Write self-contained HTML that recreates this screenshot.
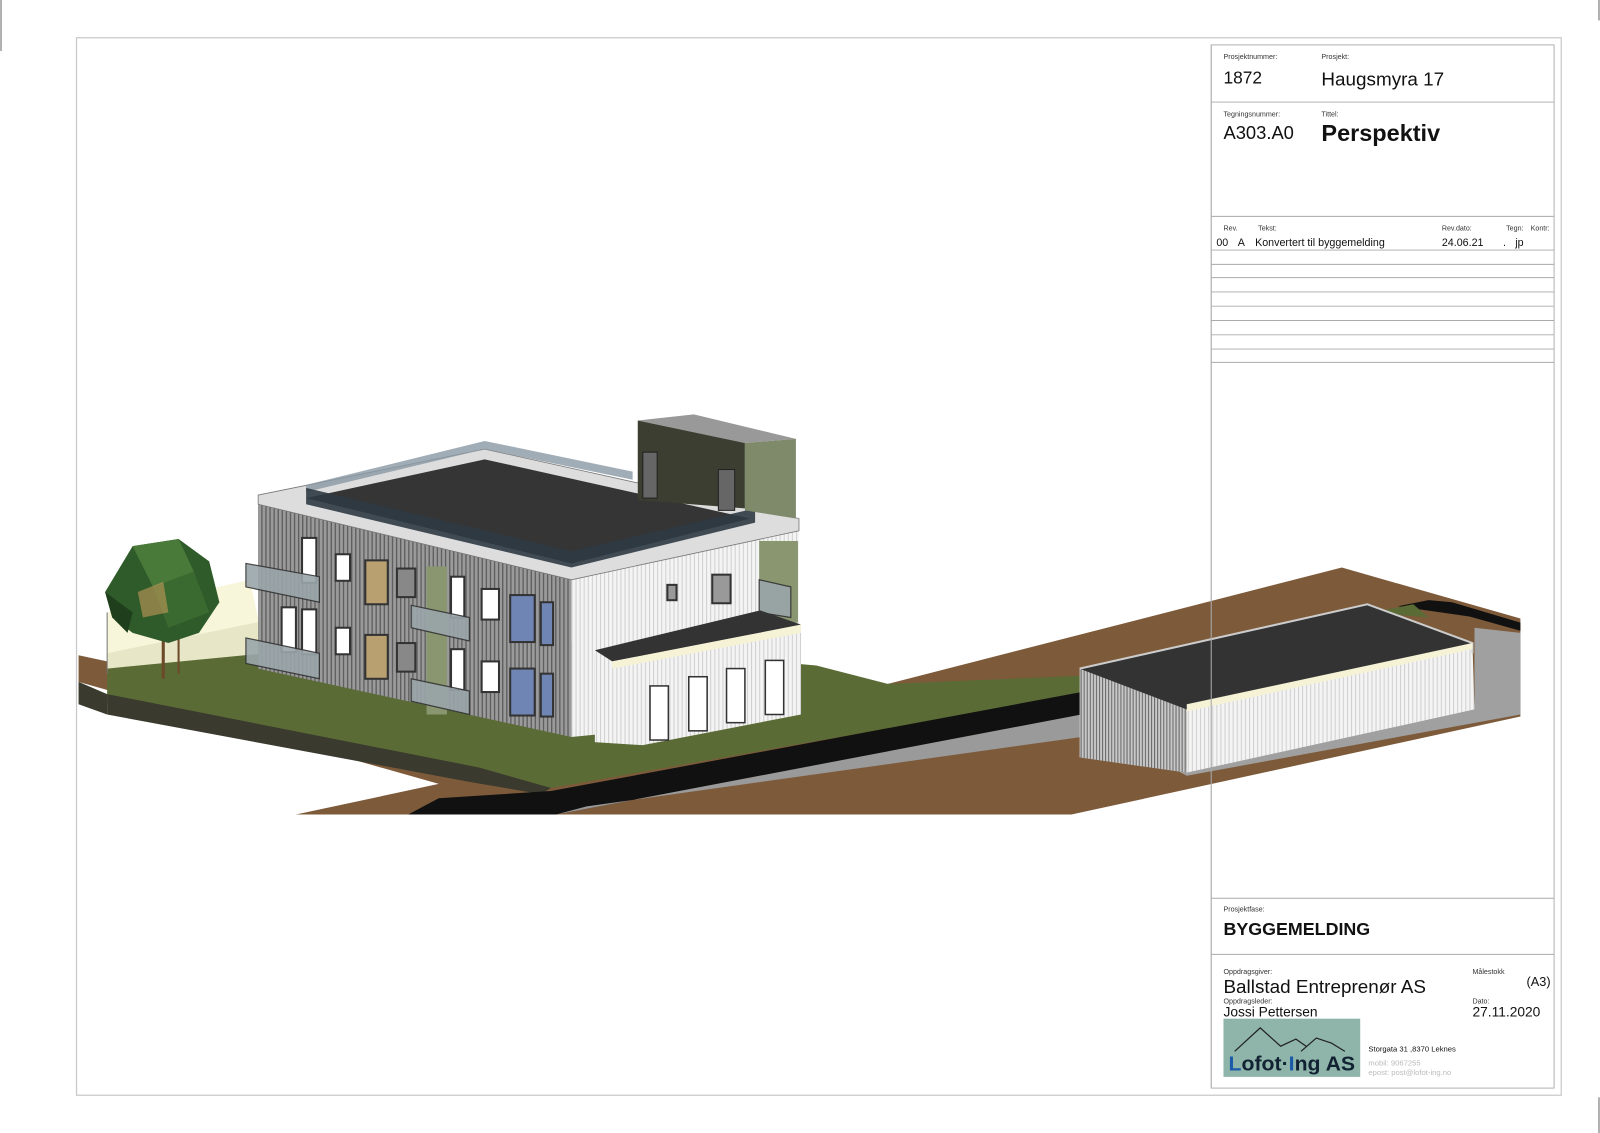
<!DOCTYPE html>
<html><head><meta charset="utf-8"><style>
html,body{margin:0;padding:0;background:#fff;width:1600px;height:1133px;overflow:hidden}
svg{display:block}
text{font-family:"Liberation Sans",sans-serif;fill:#111}
.s{font-size:7px;fill:#333}
</style></head><body>
<svg width="1600" height="1133" viewBox="0 0 1568 1110" preserveAspectRatio="none" xmlns="http://www.w3.org/2000/svg">
<defs>
<pattern id="g" width="4" height="10" patternUnits="userSpaceOnUse"><rect width="4" height="10" fill="#9a9a9a"/><rect width="1.3" height="10" fill="#5e5e5e"/></pattern>
<pattern id="w" width="4" height="10" patternUnits="userSpaceOnUse"><rect width="4" height="10" fill="#f4f4f4"/><rect width="1" height="10" fill="#cfcfcf"/></pattern>
<pattern id="gw" width="3" height="10" patternUnits="userSpaceOnUse"><rect width="3" height="10" fill="#c8c8c8"/><rect width="1" height="10" fill="#666"/></pattern>
</defs>
<line x1="1" y1="0" x2="1" y2="50" stroke="#999" stroke-width="1.5"/>
<line x1="1567" y1="0" x2="1567" y2="20" stroke="#999" stroke-width="1.5"/>
<line x1="1567" y1="1075" x2="1567" y2="1110" stroke="#999" stroke-width="1.5"/>
<rect x="75" y="37" width="1455" height="1036" fill="none" stroke="#c8c8c8" stroke-width="1.2"/>

<polygon points="77,642 560,745 870,670 1315,556 1490,606 1490,702 1050,798 290,798 430,768 77,668" fill="#7d5a3a"/>
<polygon points="105,640 270,606 800,652 870,670 1060,662 1060,680 540,772 450,760 105,690" fill="#5b6b35"/>
<polygon points="105,680 470,752 540,772 530,778 460,766 105,700" fill="#3a3a2e"/>
<polygon points="77,668 105,680 105,700 77,690" fill="#3a3a2e"/>
<polygon points="400,798 545,798 1060,700 1060,678 540,775 430,782" fill="#111"/>
<polygon points="545,798 575,790 1060,722 1060,700" fill="#9a9a9a"/>
<polygon points="1060,705 1163,760 1490,700 1490,620 1445,615 1445,690 1163,757 1058,742" fill="#a0a0a0"/>
<polygon points="1370,594 1440,604 1490,618 1490,610 1423,590 1400,588" fill="#111"/>
<polygon points="1345,600 1385,592 1400,605" fill="#5b6b35"/>
<polygon points="1058,655 1163,695 1163,757 1058,742" fill="url(#gw)"/>
<polygon points="1163,695 1443,630 1445,695 1163,757" fill="url(#w)"/>
<polygon points="1058,655 1340,592 1443,630 1163,695" fill="#333"/>
<polyline points="1058,655 1340,592 1443,630 1443,640" fill="none" stroke="#ccc" stroke-width="2"/>
<polygon points="1163,690 1443,630 1443,636 1163,697" fill="#f5f2d6"/>
<line x1="1187" y1="44" x2="1187" y2="1066" stroke="#999" stroke-width=".8"/>

<polygon points="105,600 245,568 260,640 105,655" fill="#f6f4d6" opacity=".9"/>
<line x1="105" y1="600" x2="105" y2="660" stroke="#777"/>
<polygon points="253,490 560,562 560,722 253,655" fill="url(#g)"/>
<polygon points="560,562 783,512 783,700 560,722" fill="url(#w)"/>
<polygon points="253,485 475,440 783,508 783,520 560,568 253,494" fill="#ddd" stroke="#777" stroke-width=".8"/>
<polygon points="300,488 475,450 735,508 560,552" fill="#353535"/>
<polygon points="300,475 475,432 620,462 620,470 475,440 300,482" fill="#8a98a4" opacity=".8"/>
<polygon points="300,478 560,540 740,498 740,512 560,556 300,494" fill="#2f3a44" opacity=".9"/>
<polygon points="625,412 680,406 780,430 730,434" fill="#999"/>
<polygon points="625,412 730,434 730,498 625,490" fill="#3b3e30"/>
<polygon points="730,434 780,430 780,508 730,500" fill="#7f8a6a"/>
<rect x="630" y="443" width="14" height="45" fill="#666" stroke="#222"/>
<rect x="704" y="460" width="16" height="40" fill="#666" stroke="#222"/>
<rect x="744" y="530" width="38" height="80" fill="#8a9670"/>
<g fill="#fff" stroke="#333" stroke-width="2">
<rect x="296" y="527" width="14" height="44"/><rect x="296" y="597" width="14" height="44"/>
<rect x="276" y="595" width="14" height="44"/>
<rect x="329" y="543" width="14" height="26"/><rect x="329" y="615" width="14" height="26"/>
<rect x="358" y="549" width="22" height="43" fill="#b9a070"/><rect x="358" y="622" width="22" height="43" fill="#b9a070"/>
<rect x="389" y="557" width="18" height="28" fill="#888"/><rect x="389" y="630" width="18" height="28" fill="#888"/>
<rect x="442" y="565" width="13" height="40"/><rect x="442" y="636" width="13" height="40"/>
<rect x="472" y="577" width="17" height="30"/><rect x="472" y="648" width="17" height="30"/>
<rect x="500" y="583" width="24" height="46" fill="#6f86b5"/><rect x="500" y="655" width="24" height="46" fill="#6f86b5"/>
<rect x="530" y="590" width="12" height="42" fill="#6f86b5"/><rect x="530" y="660" width="12" height="42" fill="#6f86b5"/>
<rect x="698" y="563" width="18" height="28" fill="#999"/>
<rect x="654" y="573" width="9" height="15" fill="#999"/>
</g>
<rect x="418" y="555" width="20" height="145" fill="#8a9670"/>
<g fill="#9aa6aa" stroke="#333" stroke-width="1.2" opacity=".9">
<polygon points="241,552 313,565 313,590 241,575"/>
<polygon points="241,625 313,640 313,665 241,650"/>
<polygon points="403,593 460,605 460,628 403,615"/>
<polygon points="403,665 460,677 460,700 403,687"/>
<polygon points="744,568 775,575 775,605 744,600"/>
</g>
<polygon points="583,640 630,650 630,730 583,727" fill="url(#gw)"/>
<polygon points="583,640 745,598 785,615 785,700 630,730 583,727" fill="url(#w)"/>
<polygon points="583,637 745,598 785,612 600,648" fill="#333"/>
<polygon points="600,648 785,612 785,620 600,655" fill="#f5f2d6"/>
<g fill="#fff" stroke="#333" stroke-width="1.5">
<rect x="637" y="672" width="18" height="53"/><rect x="675" y="663" width="18" height="53"/>
<rect x="712" y="655" width="18" height="53"/><rect x="750" y="647" width="18" height="53"/>
</g>
<line x1="160" y1="600" x2="160" y2="665" stroke="#6b4a2a" stroke-width="3"/>
<line x1="175" y1="600" x2="175" y2="660" stroke="#6b4a2a" stroke-width="2"/>
<polygon points="103,580 130,535 175,528 205,550 215,590 195,620 165,630 130,620 110,605" fill="#2f5a2a"/>
<polygon points="130,535 175,528 190,560 150,575" fill="#4a7a3a"/>
<polygon points="150,575 190,560 205,600 165,615" fill="#3b6a30"/>
<polygon points="103,580 130,600 125,620 110,605" fill="#1f3f1c"/>
<polygon points="135,580 160,570 165,600 140,605" fill="#c59a5a" opacity=".6"/>

<g stroke="#aaa" stroke-width=".9" fill="none">
<rect x="1187" y="44" width="336" height="1022"/>
<line x1="1187" y1="100" x2="1523" y2="100"/>
<line x1="1187" y1="212" x2="1523" y2="212"/>
<line x1="1187" y1="245" x2="1523" y2="245"/>
<line x1="1187" y1="259" x2="1523" y2="259"/>
<line x1="1187" y1="272" x2="1523" y2="272"/>
<line x1="1187" y1="286" x2="1523" y2="286"/>
<line x1="1187" y1="300" x2="1523" y2="300"/>
<line x1="1187" y1="314" x2="1523" y2="314"/>
<line x1="1187" y1="328" x2="1523" y2="328"/>
<line x1="1187" y1="342" x2="1523" y2="342"/>
<line x1="1187" y1="355" x2="1523" y2="355"/>
<line x1="1187" y1="880" x2="1523" y2="880"/>
<line x1="1187" y1="935" x2="1523" y2="935"/>
</g>
<text x="1199" y="58" class="s">Prosjektnummer:</text>
<text x="1295" y="58" class="s">Prosjekt:</text>
<text x="1199" y="82" font-size="17">1872</text>
<text x="1295" y="84" font-size="18.5">Haugsmyra 17</text>
<text x="1199" y="114" class="s">Tegningsnummer:</text>
<text x="1295" y="114" class="s">Tittel:</text>
<text x="1199" y="136" font-size="18">A303.A0</text>
<text x="1295" y="138" font-size="23" font-weight="bold">Perspektiv</text>
<text x="1199" y="226" class="s">Rev.</text>
<text x="1233" y="226" class="s">Tekst:</text>
<text x="1413" y="226" class="s">Rev.dato:</text>
<text x="1476" y="226" class="s">Tegn:</text>
<text x="1500" y="226" class="s">Kontr:</text>
<g font-size="10.5">
<text x="1192" y="241">00</text><text x="1213" y="241">A</text>
<text x="1230" y="241">Konvertert til byggemelding</text>
<text x="1413" y="241">24.06.21</text>
<text x="1473" y="241">.</text><text x="1485" y="241">jp</text>
</g>
<text x="1199" y="893" class="s">Prosjektfase:</text>
<text x="1199" y="916" font-size="17.5" font-weight="bold">BYGGEMELDING</text>
<text x="1199" y="954" class="s">Oppdragsgiver:</text>
<text x="1199" y="973" font-size="18.5">Ballstad Entreprenør AS</text>
<text x="1199" y="983" class="s">Oppdragsleder:</text>
<text x="1199" y="996" font-size="13.5">Jossi Pettersen</text>
<text x="1443" y="954" class="s">Målestokk</text>
<text x="1496" y="966" font-size="12.5">(A3)</text>
<text x="1443" y="983" class="s">Dato:</text>
<text x="1443" y="996" font-size="13.5">27.11.2020</text>
<rect x="1199" y="998" width="134" height="57" fill="#8fb5aa"/>
<polyline points="1210,1030 1235,1007 1255,1025 1270,1018 1280,1025" fill="none" stroke="#222" stroke-width="1.2"/>
<polyline points="1275,1030 1290,1017 1305,1022 1318,1030" fill="none" stroke="#222" stroke-width="1.2"/>
<text x="1204" y="1049" font-size="20" font-weight="bold" textLength="124" lengthAdjust="spacingAndGlyphs" style="fill:#123"><tspan style="fill:#1a5aa8">L</tspan>ofot·<tspan style="fill:#1a5aa8">I</tspan>ng AS</text>
<text x="1341" y="1030" font-size="7.5">Storgata 31 ,8370 Leknes</text>
<text x="1341" y="1044" font-size="7.5" style="fill:#bbb">mobil: 9067255</text>
<text x="1341" y="1053" font-size="7.5" style="fill:#bbb">epost: post@lofot-ing.no</text>
</svg>
</body></html>
